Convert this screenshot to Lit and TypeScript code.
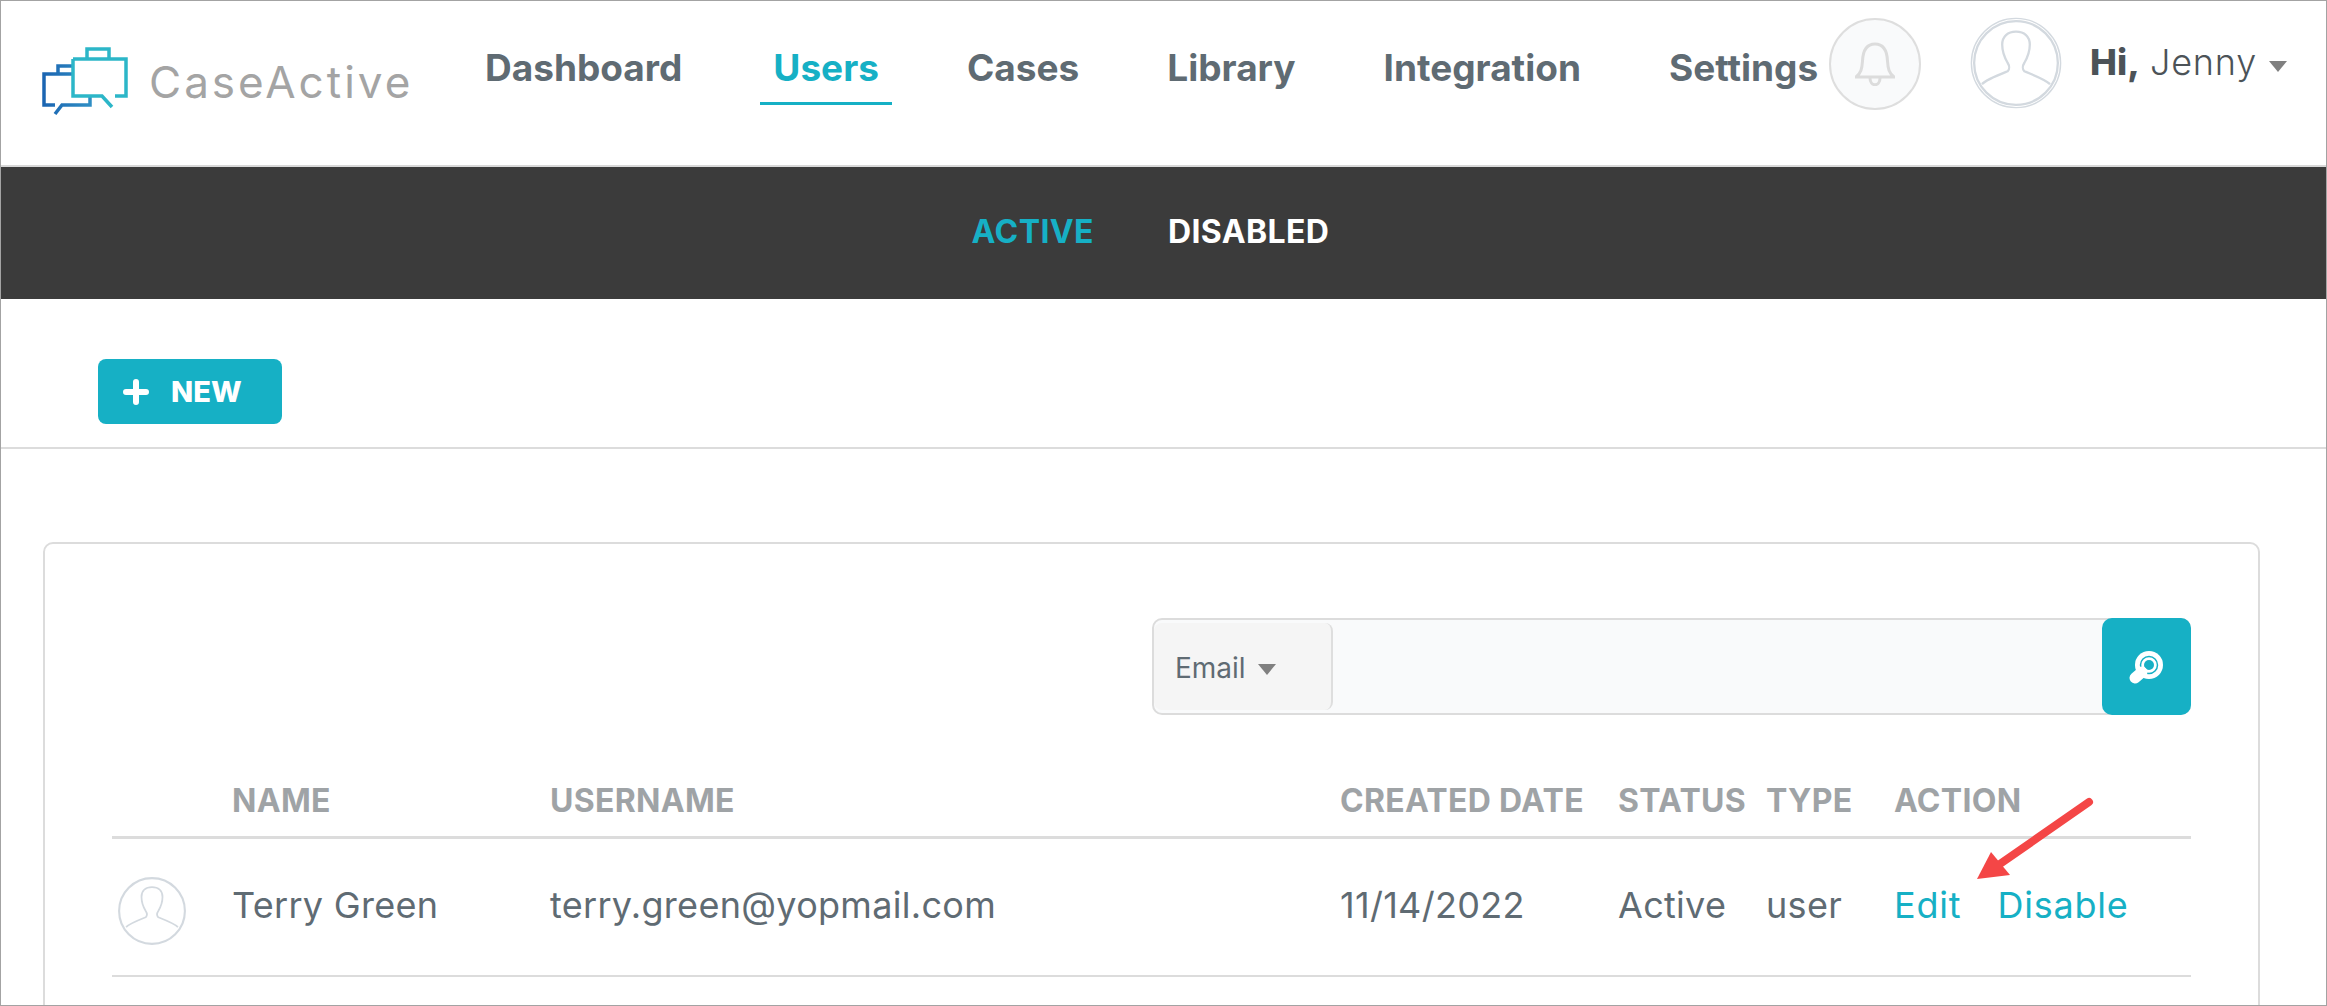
import { LitElement, html, css, svg } from 'lit';
import { customElement } from 'lit/decorators.js';

const personPath = svg`
  <path d="M13 73c5-5 18-10 28-14 2-2 2-6 0-9-3-5-6-12-6-20 0-9 6-14 15-14s15 5 15 14c0 8-3 15-6 20-2 3-2 7 0 9 10 4 23 9 28 14"
    fill="none" stroke="#d3d9df" stroke-width="2.500"></path>`;

@customElement('app-root')
export class AppRoot extends LitElement {
  static styles = css`
    :host {
      display: block;
      width: 2327px;
      height: 1006px;
      overflow: hidden;
      position: relative;
      box-sizing: border-box;
      background: #fff;
      border: 1px solid #a3a3a3;
      font-family: Inter, 'Liberation Sans', sans-serif;
      color: #5f6b73;
    }

    header {
      display: flex;
      align-items: flex-start;
      height: 166px;
      box-sizing: border-box;
      border-bottom: 2px solid #d8d8d8;
    }

    .logo {
      display: flex;
      align-items: center;
      width: 471px;
      height: 163px;
      padding-left: 41px;
      box-sizing: border-box;
    }

    .logo svg {
      width: 86px;
      height: 70px;
      margin-top: -1px;
    }

    .logo-text {
      margin-left: 21px;
      margin-top: -2px;
      font-size: 44px;
      font-weight: 400;
      color: #a4a4a4;
      letter-spacing: 3px;
    }

    nav {
      display: flex;
      gap: 62px;
      width: 1357px;
    }

    nav a {
      display: block;
      padding: 46px 13px 13px;
      font-size: 37px;
      line-height: 42px;
      font-weight: 700;
      color: #5f6b73;
      border-bottom: 3px solid transparent;
    }

    nav a.current {
      margin-left: 3px;
      color: #16b0c5;
      border-bottom-color: #16b0c5;
    }

    .bell {
      flex: none;
      width: 92px;
      height: 92px;
      margin-top: 17px;
      box-sizing: border-box;
      border: 2px solid #dedede;
      border-radius: 50%;
      background: #f9fafb;
      display: flex;
      align-items: center;
      justify-content: center;
    }

    .me {
      display: flex;
      align-items: flex-start;
      margin-left: 49px;
      margin-top: 16px;
    }

    .me svg.avatar {
      width: 92px;
      height: 92px;
    }

    .hi {
      margin-left: 28px;
      margin-top: 24px;
      font-size: 36px;
      line-height: 42px;
      color: #4c5358;
      white-space: nowrap;
    }

    .hi b {
      font-weight: 800;
    }

    .hi span {
      font-weight: 300;
      letter-spacing: 0.8px;
    }

    .caret {
      display: inline-block;
      width: 0;
      height: 0;
      border-left: 9px solid transparent;
      border-right: 9px solid transparent;
      border-top: 11px solid #808080;
      margin-left: 12px;
      vertical-align: 3px;
    }

    .tabs {
      display: flex;
      justify-content: center;
      gap: 74px;
      height: 132px;
      box-sizing: border-box;
      align-items: center;
      background: #3b3b3b;
      font-size: 32px;
      font-weight: 700;
      letter-spacing: 0.4px;
      color: #fff;
      padding: 0 26px 3px 0;
    }

    .tabs .current {
      color: #16b0c5;
    }

    .toolbar {
      height: 150px;
      box-sizing: border-box;
      padding: 60px 0 0 97px;
      border-bottom: 2px solid #dcdcdc;
    }

    .new {
      display: flex;
      align-items: center;
      width: 184px;
      height: 65px;
      box-sizing: border-box;
      padding-left: 25px;
      border-radius: 8px;
      background: #16b0c5;
      color: #fff;
      font-size: 29px;
      font-weight: 800;
    }

    .new svg {
      width: 26px;
      height: 26px;
      margin-right: 22px;
    }

    .card {
      margin: 93px 66px 0 42px;
      height: 600px;
      box-sizing: border-box;
      padding: 74px 67px 0 67px;
      border: 2px solid #dcdcdc;
      border-radius: 10px;
    }

    .search {
      display: flex;
      width: 1039px;
      height: 97px;
      margin-left: 1040px;
      box-sizing: border-box;
      border: 2px solid #dcdcdc;
      border-radius: 10px;
      background: #f9fafb;
    }

    .field {
      display: flex;
      align-items: center;
      width: 179px;
      margin: 3px 0;
      box-sizing: border-box;
      padding: 2px 0 0 21px;
      background: #f5f5f5;
      border-right: 2px solid #dedede;
      border-radius: 8px;
      font-size: 28px;
      color: #5f6b73;
    }

    .field .caret {
      margin-left: 12px;
      margin-top: 4px;
      vertical-align: middle;
    }

    .spacer {
      flex: 1;
    }

    .go {
      width: 89px;
      margin: -2px -2px -2px 0;
      border-radius: 10px;
      background: #16b0c5;
      display: flex;
      align-items: center;
      justify-content: center;
    }

    .row {
      display: grid;
      grid-template-columns: 120px 318px 790px 278px 148px 128px 297px;
      width: 2079px;
      box-sizing: border-box;
      align-items: center;
    }

    .head {
      height: 124px;
      padding-top: 50px;
      border-bottom: 3px solid #dcdcdc;
      font-size: 32px;
      font-weight: 700;
      letter-spacing: 0.3px;
      color: #9fa3a6;
      white-space: nowrap;
    }

    .body {
      height: 138px;
      border-bottom: 2px solid #dcdcdc;
      font-size: 36px;
      letter-spacing: 0.3px;
      color: #5f6b73;
      white-space: nowrap;
    }

    .body > span {
      margin-top: -4px;
    }

    .body svg {
      width: 70px;
      height: 70px;
      margin: 8px 0 0 5px;
    }

    .actions {
      display: flex;
      gap: 36px;
      color: #16b0c5;
      letter-spacing: 0.8px;
    }

    .arrow {
      position: absolute;
      left: -1px;
      top: -1px;
      pointer-events: none;
    }
  `;

  render() {
    return html`
      <header>
        <div class="logo">
          ${this.renderLogo()}
          <span class="logo-text">CaseActive</span>
        </div>
        <nav>
          <a>Dashboard</a>
          <a class="current">Users</a>
          <a>Cases</a>
          <a>Library</a>
          <a>Integration</a>
          <a>Settings</a>
        </nav>
        <div class="bell">
          <svg width="40" height="44" viewBox="0 0 40 44" fill="none" stroke="#dcdcdc" stroke-width="3">
            <path d="M1 35h38c-5-4-6-8-6.500-16C32 8 28 2 20 2S8 8 7.500 19C7 27 6 31 1 35z"></path>
            <path d="M15 36c0 9 10 9 10 0"></path>
          </svg>
        </div>
        <div class="me">
          <svg class="avatar" viewBox="0 0 100 100">
            <circle cx="50" cy="50" r="48.500" fill="#fff" stroke="#d3d9df" stroke-width="1.500"></circle>
            <circle cx="50" cy="50" r="45.500" fill="none" stroke="#d3d9df" stroke-width="2.500"></circle>
            ${personPath}
          </svg>
          <div class="hi"><b>Hi,</b> <span>Jenny</span><i class="caret"></i></div>
        </div>
      </header>
      <div class="tabs">
        <span class="current">ACTIVE</span>
        <span>DISABLED</span>
      </div>
      <div class="toolbar">
        <div class="new">
          <svg viewBox="0 0 26 26" stroke="#fff" stroke-width="6" stroke-linecap="round">
            <path d="M3 13h20M13 3v20"></path>
          </svg>
          NEW
        </div>
      </div>
      <div class="card">
        <div class="search">
          <div class="field">Email<i class="caret"></i></div>
          <div class="spacer"></div>
          <div class="go">
            <svg width="36" height="36" viewBox="0 0 36 36">
              <circle cx="20" cy="16" r="14" fill="#fff"></circle>
              <circle cx="20" cy="16" r="8.500" fill="none" stroke="#16b0c5" stroke-width="1.500"></circle>
              <circle cx="20" cy="16" r="5" fill="#16b0c5"></circle>
              <path d="M6 29l7-6" stroke="#fff" stroke-width="11" stroke-linecap="round"></path>
            </svg>
          </div>
        </div>
        <div class="row head">
          <span></span>
          <span>NAME</span>
          <span>USERNAME</span>
          <span>CREATED DATE</span>
          <span>STATUS</span>
          <span>TYPE</span>
          <span>ACTION</span>
        </div>
        <div class="row body">
          <svg viewBox="0 0 100 100">
            <circle cx="50" cy="50" r="47" fill="#fff" stroke="#d3d9df" stroke-width="3"></circle>
            ${personPath}
          </svg>
          <span>Terry Green</span>
          <span>terry.green@yopmail.com</span>
          <span>11/14/2022</span>
          <span>Active</span>
          <span>user</span>
          <span class="actions"><span>Edit</span><span>Disable</span></span>
        </div>
      </div>
      <svg class="arrow" width="2327" height="1006" viewBox="0 0 2327 1006">
        <path d="M2089 802L1997 866" stroke="#f44646" stroke-width="8" stroke-linecap="round"></path>
        <path d="M1977 879L1991 852L2010 875z" fill="#f44646"></path>
      </svg>
    `;
  }

  private renderLogo() {
    return html`<svg viewBox="0 0 86 70" fill="none" stroke-width="3.500">
      <defs>
        <linearGradient id="logo-blue" x1="0" x2="1" y1="0" y2="0">
          <stop offset="0" stop-color="#1b65b2"></stop>
          <stop offset="1" stop-color="#2f8ec4"></stop>
        </linearGradient>
      </defs>
      <path d="M30 27H2v31h11M13 67l7-9h28v-9M16 27v-8h14" stroke="url(#logo-blue)"></path>
      <path d="M45 12V2h22v10M31 12h53v37H73M31 12v37h29l10 11" stroke="#2cb6c8"></path>
    </svg>`;
  }
}
